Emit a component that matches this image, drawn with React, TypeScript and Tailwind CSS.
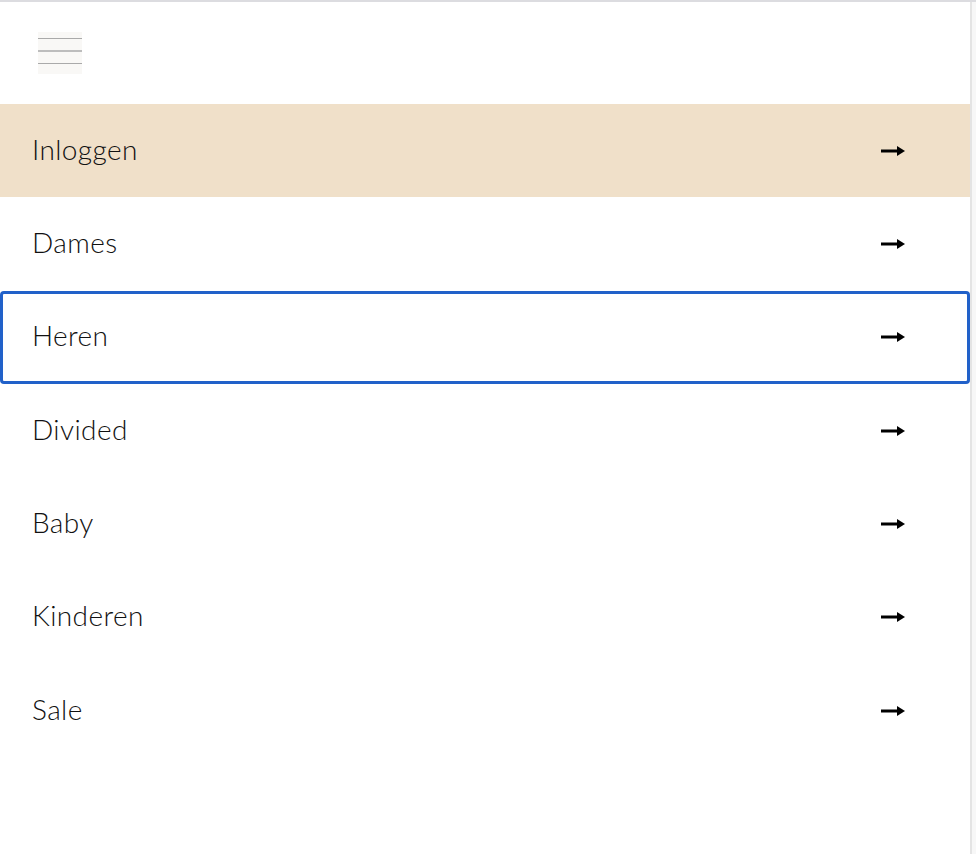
import React from "react";

const items = ["Inloggen", "Dames", "Heren", "Divided", "Baby", "Kinderen", "Sale"];

function Arrow() {
  return (
    <svg width="24" height="12" viewBox="0 0 24 12" className="block">
      <rect x="0" y="4.5" width="18" height="3" fill="#000" />
      <polygon points="16,1 24,6 16,11" fill="#000" />
    </svg>
  );
}

export default function App() {
  return (
    <div
      className="w-[976px] h-[854px] bg-white flex flex-col overflow-hidden"
      style={{ fontFamily: "Lato, 'Noto Sans', sans-serif" }}
    >
      <div className="h-[2px] bg-[#dcdce0] shrink-0" />
      <div className="flex flex-1">
        <div className="w-[970px] flex flex-col">
          <div className="h-[102px] pl-[38px] pt-[30px]">
            <button className="w-[44px] h-[42px] bg-[#f9f8f6] flex flex-col pt-[6px]">
              <span className="block h-[1px] bg-[#aaaaaa] w-full" />
              <span className="block h-[2px] bg-[#bdbdbd] w-full mt-[11px]" />
              <span className="block h-[1px] bg-[#aaaaaa] w-full mt-[11px]" />
            </button>
          </div>
          {items.map((it, i) => (
            <div
              key={it}
              className={
                "h-[93.33px] flex items-center justify-between pl-[32px] pr-[65px] " +
                (i === 0 ? "bg-[#f0e0c9] " : "") +
                (i === 2 ? "outline-[3px] outline-[#2161c9] -outline-offset-[3px] rounded-[4px] " : "")
              }
            >
              <span className="text-[28px] font-light text-[#111] leading-none tracking-[0.4px] mb-[4px]">{it}</span>
              <Arrow />
            </div>
          ))}
        </div>
        <div className="w-[2px] bg-[#e4e4e4]" />
        <div className="w-[4px] bg-[#f7f7f7]" />
      </div>
    </div>
  );
}
